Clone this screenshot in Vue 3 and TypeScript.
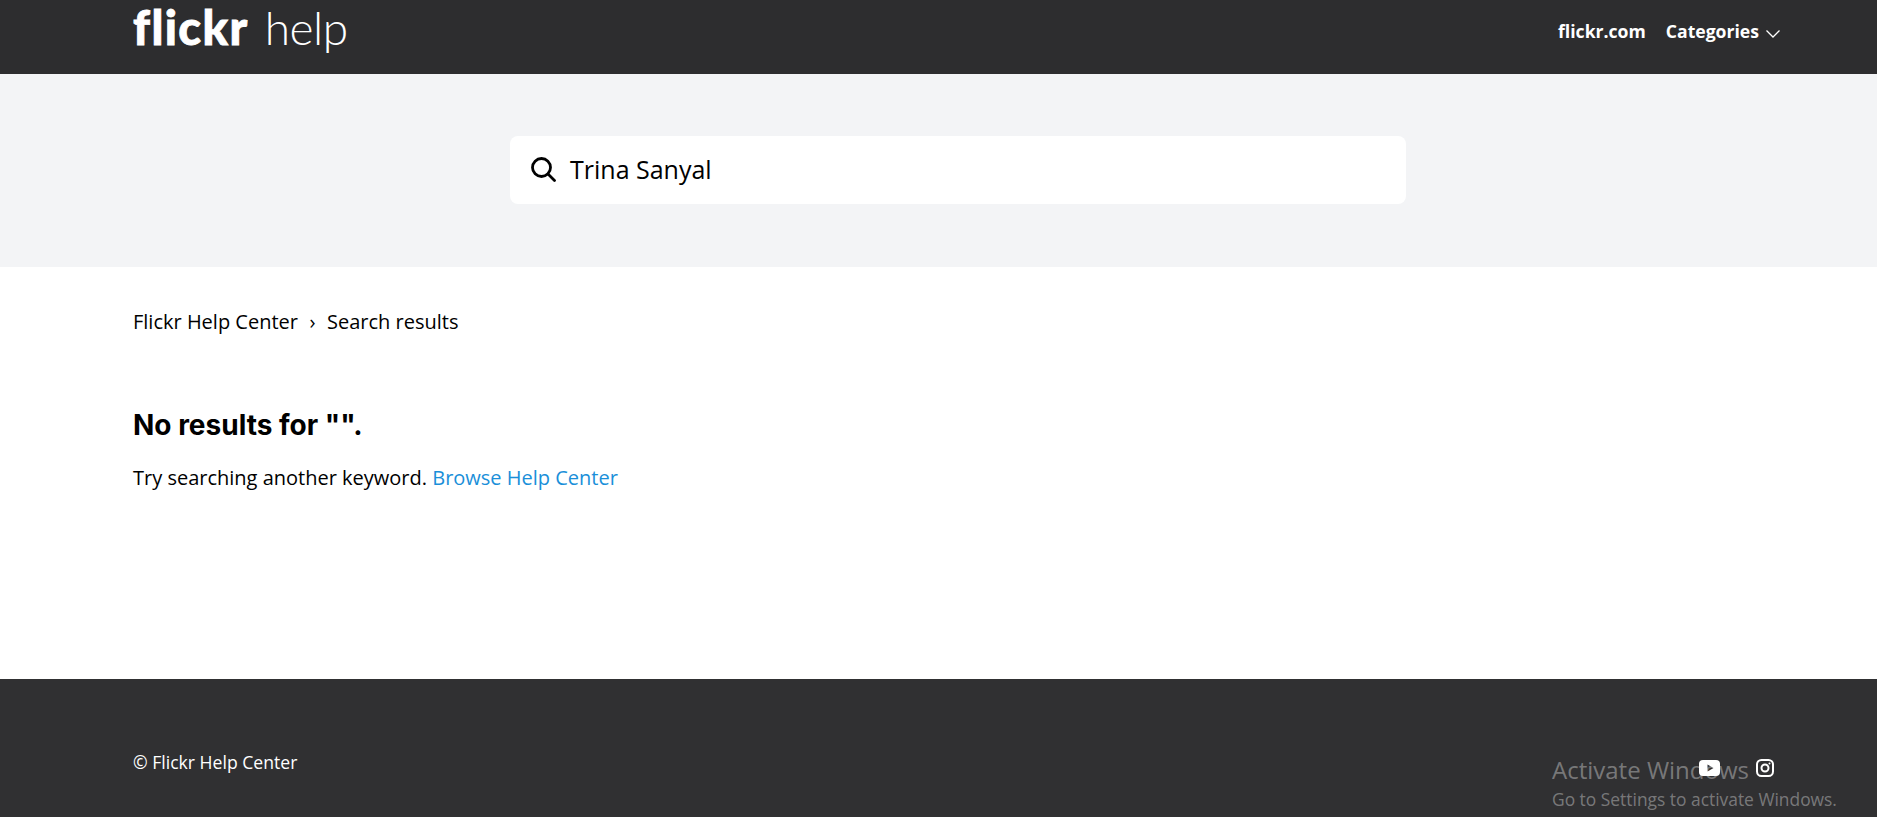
<script setup lang="ts">
const heading: string = 'No results for "".'
</script>

<template>
  <div class="page">
    <header class="topbar">
      <div class="logo">
        <span class="logo-flickr">flickr</span>
        <span class="logo-help">help</span>
      </div>
      <nav class="topnav">
        <a class="navlink">flickr.com</a>
        <a class="navlink categories">
          Categories
          <svg class="chev" width="14" height="8" viewBox="0 0 14 8" fill="none">
            <path d="M0.500 0.500l6.500 6.500 6.500-6.500" stroke="#fff" stroke-width="1.300" />
          </svg>
        </a>
      </nav>
    </header>

    <section class="hero">
      <div class="searchbox">
        <svg class="searchicon" width="25" height="25" viewBox="0 0 25 25" fill="none">
          <circle cx="10.500" cy="10.500" r="9" stroke="#000" stroke-width="2.800" />
          <path d="M17.500 17.500l6 6" stroke="#000" stroke-width="2.800" stroke-linecap="round" />
        </svg>
        <span class="searchtext">Trina Sanyal</span>
      </div>
    </section>

    <main class="content">
      <div class="crumbs">
        <span>Flickr Help Center</span>
        <span class="sep">›</span>
        <span>Search results</span>
      </div>
      <h1 class="title">{{ heading }}</h1>
      <p class="hint">Try searching another keyword. <a class="browse">Browse Help Center</a></p>
    </main>

    <footer class="footer">
      <span class="copy">© Flickr Help Center</span>
      <div class="social">
        <svg width="21" height="16" viewBox="0 0 21 16">
          <rect width="21" height="16" rx="4" fill="#fff" />
          <path d="M8.500 4.500l6 3.500-6 3.500z" fill="#303032" />
        </svg>
        <svg width="18" height="18" viewBox="0 0 18 18" fill="none">
          <rect x="1" y="1" width="16" height="16" rx="4.500" stroke="#fff" stroke-width="2" />
          <circle cx="9" cy="9" r="3.500" stroke="#fff" stroke-width="2" />
          <circle cx="13.500" cy="4.500" r="1" fill="#fff" />
        </svg>
      </div>
    </footer>

    <div class="watermark">
      <div class="wm-title">Activate Windows</div>
      <div class="wm-sub">Go to Settings to activate Windows.</div>
    </div>
  </div>
</template>

<style>
html,
body {
  margin: 0;
  background: #fff;
}
</style>

<style scoped>
.page {
  position: relative;
  height: 817px;
  overflow: hidden;
  display: flex;
  flex-direction: column;
  font-family: "Open Sans", "Noto Sans", sans-serif;
  color: #000;
}
.topbar {
  height: 74px;
  background: #2d2d2f;
  display: flex;
  justify-content: space-between;
  align-items: flex-start;
  padding: 0 97px 0 133px;
  color: #fff;
}
.logo {
  display: flex;
  align-items: baseline;
  height: 58px;
}
.logo-flickr {
  font-family: Lato, sans-serif;
  font-weight: 900;
  font-size: 47px;
  line-height: 54px;
  letter-spacing: 1.400px;
  -webkit-text-stroke: 0.800px #fff;
}
.logo-help {
  font-family: Lato, sans-serif;
  font-weight: 300;
  font-size: 46px;
  line-height: 54px;
  margin-left: 16px;
  letter-spacing: -0.500px;
}
.topnav {
  display: flex;
  gap: 20px;
  padding-top: 19px;
  font-weight: 700;
  font-size: 17.600px;
  line-height: 24px;
}
.categories {
  display: flex;
  align-items: center;
  gap: 7px;
}
.chev {
  margin-top: 6px;
}
.hero {
  height: 193px;
  background: #f3f4f6;
  display: flex;
  justify-content: center;
  align-items: flex-start;
  padding-top: 62px;
  box-sizing: border-box;
}
.searchbox {
  width: 896px;
  height: 68px;
  margin-left: 39px;
  background: #fff;
  border-radius: 8px;
  display: flex;
  align-items: center;
  padding: 0 0 2px 21px;
  box-sizing: border-box;
}
.searchicon {
  flex: none;
}
.searchtext {
  margin-left: 14px;
  font-size: 25px;
  color: #000;
}
.content {
  flex: 1;
  padding: 41px 133px 0;
}
.crumbs {
  display: flex;
  gap: 11.500px;
  font-size: 20px;
  line-height: 27px;
}
.title {
  margin: 71px 0 0;
  font-family: Inter, sans-serif;
  font-weight: 700;
  font-size: 28px;
  line-height: 38px;
}
.hint {
  margin: 20px 0 0;
  font-size: 20px;
  line-height: 27px;
}
.browse {
  color: #1a8fd9;
}
.footer {
  height: 138px;
  background: #303032;
  box-sizing: border-box;
  padding: 71px 103px 0 133px;
  display: flex;
  justify-content: space-between;
  align-items: flex-start;
  color: #fff;
  font-size: 17.600px;
}
.copy {
  line-height: 24px;
}
.social {
  display: flex;
  gap: 36px;
  align-items: center;
  margin-top: 9px;
}
.watermark {
  position: absolute;
  left: 1552px;
  top: 754px;
  color: rgba(255, 255, 255, 0.36);
  font-family: "Open Sans", sans-serif;
  pointer-events: none;
}
.wm-title {
  font-size: 24px;
  line-height: 32px;
}
.wm-sub {
  font-size: 17.400px;
  line-height: 26px;
}
</style>
